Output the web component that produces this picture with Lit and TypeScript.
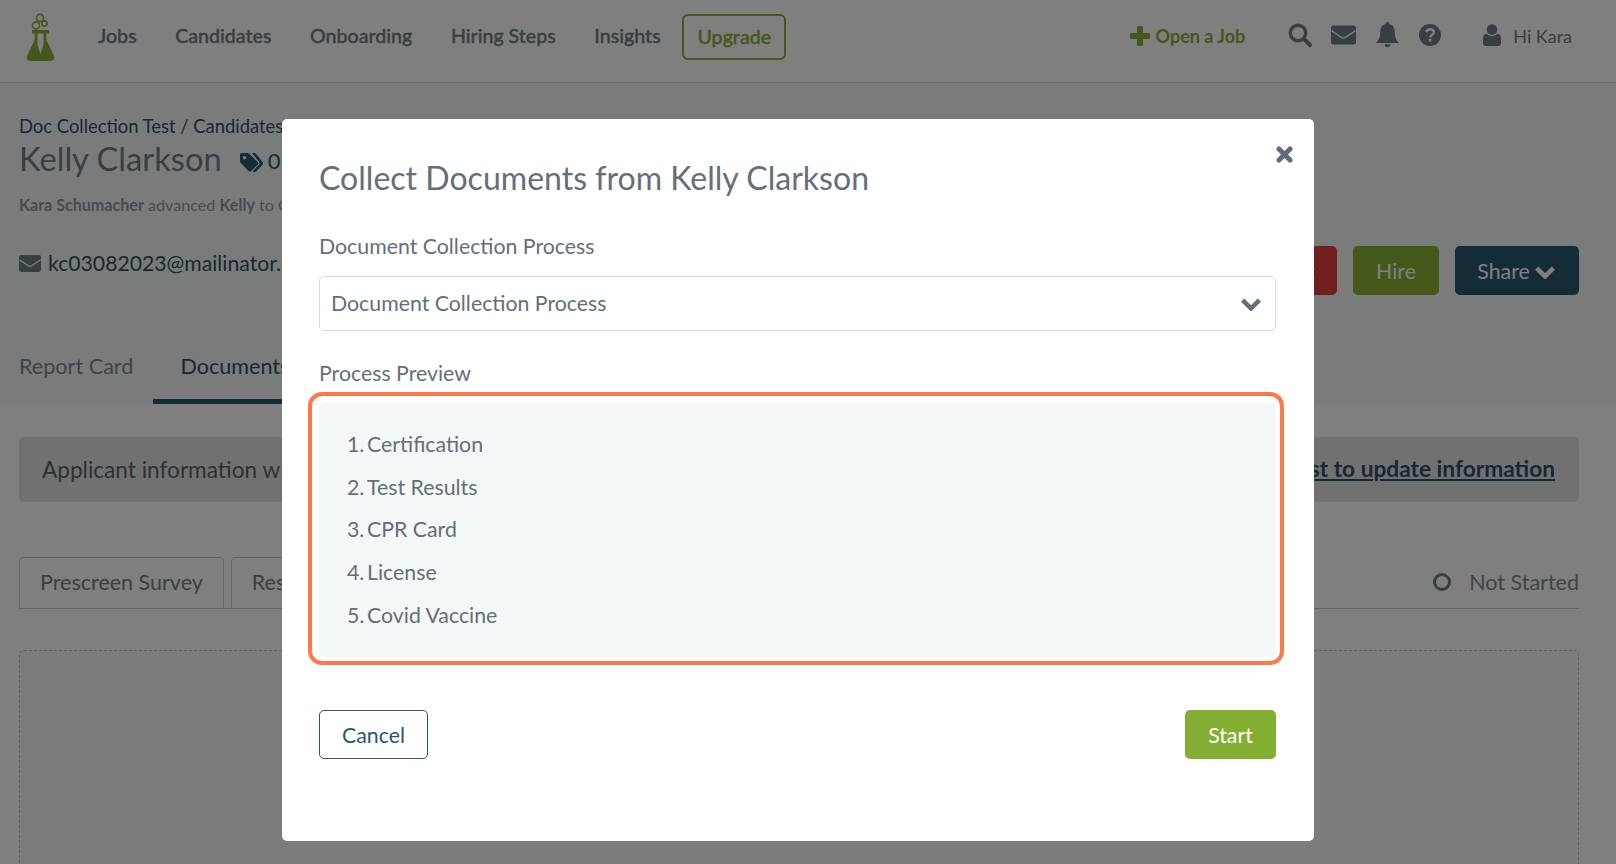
import { LitElement, html, css } from "lit";
import { customElement } from "lit/decorators.js";

const chevron = (cls: string) => html`<svg class=${cls} viewBox="0 0 20 13"><path d="M1.6 2.200 10 10.400l8.400-8.200" fill="none" stroke="currentColor" stroke-width="4.600"/></svg>`;
const envelope = (cls: string) => html`<svg class=${cls} viewBox="0 0 26 20"><rect width="26" height="20" rx="2.5" fill="currentColor"/><path d="M0.5 5.5 11 12.6q2 1.3 4 0L25.5 5.5" fill="none" stroke="#fff" stroke-width="1.5"/></svg>`;

@customElement("app-root")
export class AppRoot extends LitElement {
  static styles = css`
    :host { display: block; position: relative; width: 1616px; height: 864px; overflow: hidden; background: #fff; font-family: "Lato", "Liberation Sans", sans-serif; color: #7a8a92; }
    * { box-sizing: border-box; }
    .nav { display: flex; align-items: center; height: 83px; border-bottom: 1px solid #dcdcdc; padding: 0 44px 11px 24px; background: #fff; }
    .logo { width: 32px; height: 50px; color: #86b133; margin-right: 42px; margin-top: 4px; }
    .links { display: flex; align-items: center; gap: 38.6px; font-size: 19.6px; font-weight: 500; color: #6b7d87; -webkit-text-stroke: 0.35px currentColor; }
    .upgrade { margin-left: -17px; margin-top: 2px; display: flex; align-items: center; justify-content: center; width: 104px; height: 46px; border: 2px solid #86b133; border-radius: 6px; color: #86b133; }
    .right { margin-left: auto; display: flex; align-items: center; color: #6f7e86; }
    .open { display: flex; align-items: center; gap: 6px; color: #86b133; font-size: 18px; font-weight: 700; margin-right: 43px; }
    .open svg { width: 20px; height: 20px; }
    .i-search { width: 24px; height: 24px; margin: -2px 19px 0 0; }
    .i-env { width: 25px; height: 20px; margin: -1px 20px 0 0; }
    .i-bell { width: 23px; height: 26px; margin: -2px 20px 0 0; }
    .i-q { width: 22px; height: 22px; margin: -2px 42px 0 0; }
    .i-user { width: 18px; height: 22px; margin: -2px 12px 0 0; }
    .hi { font-size: 18px; }

    .top { background: #f5f8f8; padding: 31px 37px 0 19px; height: 321px; }
    .crumb { font-size: 18.4px; line-height: 24px; color: #2c5266; height: 24px; }
    .name { display: flex; align-items: center; height: 36px; margin-top: 2px; font-size: 32.7px; color: #6f7f87; }
    .tag { display: flex; align-items: center; font-size: 22px; color: #28586e; margin: 5px 0 0 18px; gap: 5px; }
    .tag svg { width: 23px; height: 20px; margin-top: 4px; }
    .activity { font-size: 16.1px; line-height: 20px; margin-top: 19px; color: #8b989f; }
    .activity b { font-weight: 700; }
    .contact { display: flex; justify-content: space-between; margin-top: 31px; height: 49px; }
    .email { display: flex; align-items: center; height: 34px; gap: 7px; font-size: 21.2px; color: #2c5266; }
    .email svg { width: 22px; height: 17px; color: #6f7e86; margin-top: 1px; }
    .actions { display: flex; gap: 16px; }
    .act { display: flex; align-items: center; justify-content: center; height: 49px; border-radius: 5px; color: #fff; font-size: 21.3px; padding: 0 22px; }
    .reject { background: #de3e3c; }
    .hire { background: #88b034; width: 86px; padding: 0; }
    .share { background: #28586e; width: 124px; padding: 0 2px 0 0; gap: 5px; }
    .share svg { width: 20px; height: 13px; margin-top: 3px; }
    .tabs { display: flex; margin-top: 39px; height: 70px; font-size: 21.6px; line-height: 24px; }
    .tab { padding-top: 20px; }
    .tab.active { margin-left: 20px; padding: 20px 27px 0; border-bottom: 5px solid #28586e; color: #2c5266; }

    .content { padding: 33px 37px 0 19px; }
    .banner { display: flex; justify-content: space-between; align-items: center; height: 65px; background: #e3e3e3; border-radius: 5px; padding: 0 24px 0 23px; font-size: 22.7px; line-height: 28px; color: #54646c; }
    .banner span { font-size: 22.6px; }
    .banner a { font-weight: 700; color: #2c5266; text-decoration: underline; margin-top: -1px; }
    .subtabs { display: flex; align-items: flex-end; gap: 7px; margin-top: 56px; height: 51px; border-bottom: 1px solid #c8c8c8; font-size: 21.5px; }
    .sub { display: flex; align-items: center; height: 51px; padding: 0 20px 3px; border: 1px solid #c8c8c8; border-bottom: 0; border-radius: 5px 5px 0 0; color: #6f7f87; }
    .status { margin-left: auto; display: flex; align-items: center; gap: 18px; height: 50px; padding-bottom: 3px; color: #7a8a92; }
    .ring { width: 18px; height: 18px; border: 3px solid #6f7e86; border-radius: 50%; }
    .drop { margin-top: 41px; height: 420px; background: #f7faf8; border: 1px dashed #c0c0c0; border-radius: 5px; }

    .overlay { position: absolute; inset: 0; background: rgba(0,0,0,.5); padding: 119px 0 0 282px; }
    .modal { position: relative; width: 1032px; height: 722px; background: #fff; border-radius: 5px; padding: 39px 38px 0 37px; color: #636f7a; }
    .title { font-size: 32.05px; line-height: 40px; }
    .close { position: absolute; left: 994px; top: 27px; width: 17px; height: 17px; color: #5f6b76; }
    .label { font-size: 21.3px; line-height: 24px; margin-top: 36px; }
    .select { display: flex; align-items: center; justify-content: space-between; height: 55px; margin-top: 18px; border: 1px solid #d9dadb; border-radius: 5px; padding: 0 14px 0 11px; font-size: 21.3px; line-height: 24px; }
    .select span { margin-top: -2px; }
    .select svg { width: 20px; height: 13px; margin-top: 2px; }
    .label.pp { margin-top: 30px; }
    .preview { position: relative; height: 254px; margin-top: 18px; background: #f4f8f9; border-radius: 5px; padding: 20px 0 0 48px; }
    .preview ol { margin: 0; padding: 0; font-size: 21.3px; line-height: 42.7px; }
    .preview li::marker { content: counter(list-item) ".\\2009"; }
    .mark { position: absolute; left: -11px; top: -11px; right: -8px; bottom: -8px; border: 4px solid #ff7849; border-radius: 14px; pointer-events: none; }
    .foot { display: flex; justify-content: space-between; margin-top: 53px; }
    .btn { display: flex; align-items: center; justify-content: center; height: 49px; border-radius: 5px; font-size: 21.3px; }
    .cancel { width: 109px; border: 1px solid #28586e; color: #28586e; background: #fff; }
    .start { width: 91px; background: #84af33; color: #fff; }
  `;

  render() {
    const steps = ["Certification", "Test Results", "CPR Card", "License", "Covid Vaccine"];
    return html`
      <header class="nav">
        <svg class="logo" viewBox="0 0 32 50">
          <g fill="none" stroke="currentColor" stroke-width="1.6"><circle cx="16" cy="5" r="3.6"/><circle cx="12" cy="12.5" r="3.6"/><circle cx="20.5" cy="10.5" r="2.6"/></g>
          <path fill-rule="evenodd" fill="currentColor" d="M8 17h17v3.4h-2.6v6.6l7.4 15.6q2 5.4-3.6 5.4H6.800q-5.600 0-3.600-5.400L10.600 27v-6.600H8z M13.500 20.400v11.600l3 9 3-9V20.400z"/>
        </svg>
        <div class="links">
          <span>Jobs</span><span>Candidates</span><span>Onboarding</span><span>Hiring Steps</span><span>Insights</span>
          <span class="upgrade">Upgrade</span>
        </div>
        <div class="right">
          <span class="open"><svg viewBox="0 0 20 20"><path fill="currentColor" d="M7 1.500Q7 0 8.500 0h3Q13 0 13 1.500V7h5.500Q20 7 20 8.500v3q0 1.500-1.500 1.500H13v5.500q0 1.500-1.500 1.500h-3Q7 20 7 18.500V13H1.500Q0 13 0 11.500v-3Q0 7 1.500 7H7z"/></svg>Open a Job</span>
          <svg class="i-search" viewBox="0 0 24 24"><circle cx="10" cy="10" r="7.700" fill="none" stroke="currentColor" stroke-width="3.400"/><path d="M15.500 15.500 22 22" stroke="currentColor" stroke-width="4" stroke-linecap="round"/></svg>
          ${envelope("i-env")}
          <svg class="i-bell" viewBox="0 0 23 26"><path fill="currentColor" d="M11.500 0a1.700 1.700 0 0 1 1.700 2.100C17 3 18.800 6 18.800 10c0 6 1.700 8.600 4.200 11H0c2.500-2.400 4.200-5 4.200-11 0-4 1.800-7 5.600-7.900A1.700 1.700 0 0 1 11.500 0zM8.600 22.200h5.800a2.900 2.900 0 0 1-5.800 0z"/></svg>
          <svg class="i-q" viewBox="0 0 22 22"><circle cx="11" cy="11" r="11" fill="currentColor"/><path d="M7.400 8.300c.3-2 1.700-3 3.700-3 2.200 0 3.700 1.200 3.700 3 0 2.600-3.600 2.600-3.600 5" fill="none" stroke="#fff" stroke-width="2.400"/><rect x="9.800" y="14.900" width="2.600" height="2.600" fill="#fff"/></svg>
          <svg class="i-user" viewBox="0 0 18 22"><circle cx="9" cy="5.500" r="5.300" fill="currentColor"/><path fill="currentColor" d="M3.200 9.600Q6 12.200 9 12.200t5.800-2.600Q18 10.800 18 15.500v3.500q0 3-3 3H3q-3 0-3-3v-3.500Q0 10.800 3.200 9.600z"/></svg>
          <span class="hi">Hi Kara</span>
        </div>
      </header>

      <section class="top">
        <div class="crumb">Doc Collection Test / Candidates</div>
        <div class="name">Kelly Clarkson
          <span class="tag"><svg viewBox="0 0 23 20"><path fill="currentColor" d="M0 1.800Q0 0 1.800 0h5.700q1 0 1.800.8l8.300 8.300q1.300 1.300 0 2.600l-6.400 6.400q-1.300 1.300-2.600 0L.8 10Q0 9.200 0 8.200zM4.500 3a1.700 1.700 0 1 0 .01 0zM12 0h2.500q.8 0 1.500.7l6.400 8.400q1.200 1.400 0 2.800L16 18.500q-1.300 1.300-2.600 0l-.6-.6 6-6q1.500-1.700 0-3.400z"/></svg>0</span>
        </div>
        <div class="activity"><b>Kara Schumacher</b> advanced <b>Kelly</b> to Certification</div>
        <div class="contact">
          <div class="email">${envelope("")}kc03082023@mailinator.com</div>
          <div class="actions">
            <span class="act reject">Reject</span>
            <span class="act hire">Hire</span>
            <span class="act share">Share ${chevron("")}</span>
          </div>
        </div>
        <nav class="tabs"><span class="tab">Report Card</span><span class="tab active">Documents</span></nav>
      </section>

      <section class="content">
        <div class="banner"><span>Applicant information will be collected</span><a>Request to update information</a></div>
        <div class="subtabs">
          <span class="sub">Prescreen Survey</span><span class="sub">Resume</span>
          <span class="status"><span class="ring"></span>Not Started</span>
        </div>
        <div class="drop"></div>
      </section>

      <div class="overlay">
        <div class="modal">
          <div class="title">Collect Documents from Kelly Clarkson</div>
          <svg class="close" viewBox="0 0 17 17"><path d="M3 3 14 14M14 3 3 14" stroke="currentColor" stroke-width="5" stroke-linecap="round"/></svg>
          <div class="label">Document Collection Process</div>
          <div class="select"><span>Document Collection Process</span>${chevron("")}</div>
          <div class="label pp">Process Preview</div>
          <div class="preview">
            <ol>${steps.map((s) => html`<li>${s}</li>`)}</ol>
            <div class="mark"></div>
          </div>
          <div class="foot">
            <span class="btn cancel">Cancel</span>
            <span class="btn start">Start</span>
          </div>
        </div>
      </div>
    `;
  }
}
